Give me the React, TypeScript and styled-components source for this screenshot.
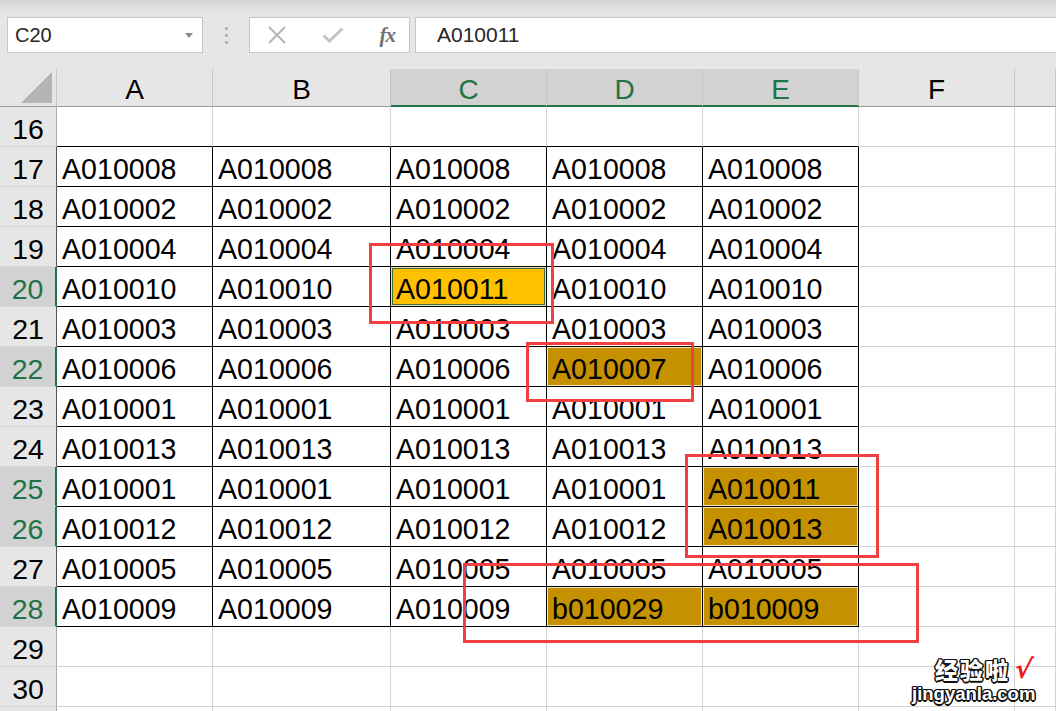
import React from "react";
import styled, { createGlobalStyle, css } from "styled-components";

const Global = createGlobalStyle`
  html, body { margin: 0; padding: 0; background: #ffffff; overflow: hidden; }
  body { font-family: "Liberation Sans", Arial, sans-serif; }
`;

const GREEN = "#217346";
const GRID = "#d4d4d4";
const HEAD_BG = "#e6e6e6";
const HEAD_SEL = "#d2d2d2";

const Page = styled.div`
  position: relative;
  width: 1056px;
  height: 711px;
  overflow: hidden;
  background: #ffffff;
`;

const TopStrip = styled.div`
  height: 17px;
  background: linear-gradient(#d4d4d4, #e3e3e3 55%, #e6e6e6);
`;

const FormulaBar = styled.div`
  display: flex;
  height: 36px;
  padding-left: 7px;
  background: ${HEAD_BG};
`;

const Box = styled.div`
  box-sizing: border-box;
  height: 36px;
  background: #ffffff;
  border: 1px solid #c6c6c6;
  display: flex;
  align-items: center;
`;

const NameBox = styled(Box)`
  width: 196px;
  padding: 0 9px 0 7px;
  justify-content: space-between;
  font-size: 20px;
  color: #262626;
`;

const Separator = styled.div`
  width: 46px;
  display: flex;
  flex-direction: column;
  align-items: center;
  justify-content: center;
  gap: 4px;
`;

const Dot = styled.span`
  width: 3px;
  height: 3px;
  background: #b5b5b5;
`;

const FxBox = styled(Box)`
  width: 161px;
  padding: 0 14px 0 17px;
  justify-content: space-between;
`;

const FxText = styled.span`
  font-family: "Liberation Serif", "Times New Roman", serif;
  font-style: italic;
  font-weight: bold;
  font-size: 21px;
  color: #707070;
  letter-spacing: -1px;
`;

const FormulaInput = styled(Box)`
  flex: 1;
  margin-left: 5px;
  border-right: none;
  padding-left: 21px;
  font-size: 21px;
  color: #262626;
`;

const GapBand = styled.div`
  height: 16px;
  background: ${HEAD_BG};
`;

const Sheet = styled.div`
  display: grid;
  grid-template-columns: 57px 156px 178px 156px 156px 156px 156px 41px;
  grid-template-rows: 38px;
  grid-auto-rows: 40px;
`;

const Corner = styled.div`
  box-sizing: border-box;
  background: ${HEAD_BG};
  border-bottom: 1px solid #9b9b9b;
  border-right: 1px solid #c6c6c6;
  display: flex;
  align-items: flex-end;
  justify-content: flex-end;
  padding: 0 4px 3px 0;
`;

const ColHeader = styled.div<{ $sel?: boolean }>`
  box-sizing: border-box;
  background: ${(p) => (p.$sel ? HEAD_SEL : HEAD_BG)};
  border-right: 1px solid #c6c6c6;
  border-bottom: ${(p) => (p.$sel ? `2px solid ${GREEN}` : "1px solid #9b9b9b")};
  color: ${(p) => (p.$sel ? GREEN : "#000")};
  font-size: 28px;
  line-height: 38px;
  padding-top: 2px;
  text-align: center;
`;

const RowHeader = styled.div<{ $sel?: boolean; $dark?: boolean }>`
  box-sizing: border-box;
  background: ${(p) => (p.$sel ? HEAD_SEL : HEAD_BG)};
  border-bottom: 1px solid ${GRID};
  border-right: 1px solid ${(p) => (p.$dark ? "#555" : "#ababab")};
  ${(p) =>
    p.$sel &&
    css`
      border-right: 2px solid ${GREEN};
    `}
  color: ${(p) => (p.$sel ? GREEN : "#000")};
  font-size: 28.5px;
  line-height: 40px;
  padding-top: 2px;
  text-align: center;
  overflow: hidden;
`;

type Fill = "none" | "active" | "sel";

const Cell = styled.div<{ $fill: Fill; $rb?: boolean; $bb?: boolean }>`
  box-sizing: border-box;
  border-right: 1px solid ${(p) => (p.$rb ? "#000" : GRID)};
  border-bottom: 1px solid ${(p) => (p.$bb ? "#000" : GRID)};
  font-size: 28.6px;
  line-height: 40px;
  padding: 2px 0 0 5px;
  color: #000;
  white-space: nowrap;
  overflow: hidden;
  ${(p) =>
    p.$fill === "active" &&
    css`
      background: #ffc000;
      box-shadow: inset 0 0 0 1px #eadfb0, inset 0 0 0 2px #3b6e3e;
    `}
  ${(p) =>
    p.$fill === "sel" &&
    css`
      background: #c59100;
      box-shadow: inset 0 0 0 1px #f2e4c0;
    `}
`;

const RedBox = styled.div`
  position: absolute;
  box-sizing: border-box;
  border: 3px solid #f23f3f;
  pointer-events: none;
`;

const Watermark = styled.div`
  position: absolute;
  left: 912px;
  top: 654px;
  display: flex;
  flex-direction: column;
  align-items: flex-end;
  pointer-events: none;
`;

const outline = css`
  color: #ffffff;
  text-shadow: -1px -1px 0 #111, 1px -1px 0 #111, -1px 1px 0 #111, 1px 1px 0 #111,
    0 -1.5px 0 #111, 0 1.5px 0 #111, -1.5px 0 0 #111, 1.5px 0 0 #111;
`;

const WmTop = styled.div`
  display: flex;
  align-items: center;
  gap: 5px;
  margin-right: 20px;
  height: 30px;
`;

const WmCn = styled.span`
  ${outline};
  font-family: "Noto Sans CJK SC", sans-serif;
  font-weight: 900;
  font-size: 23px;
  letter-spacing: 2px;
  line-height: 26px;
`;

const WmCheck = styled.span`
  color: #f0141e;
  font-family: "DejaVu Sans", sans-serif;
  font-weight: bold;
  font-size: 26px;
  line-height: 26px;
  transform: skewX(-8deg);
`;

const WmEn = styled.span`
  ${outline};
  font-family: "Liberation Sans", Arial, sans-serif;
  font-weight: bold;
  font-size: 18.5px;
  line-height: 20px;
  margin-right: 17px;
`;

const cols = ["A", "B", "C", "D", "E", "F", ""];
const selCols = new Set(["C", "D", "E"]);
const selRows = new Set([20, 22, 25, 26, 28]);

type RowDef = { n: number; label?: string; cells: string[]; fills?: Record<number, Fill> };

const rep = (v: string) => [v, v, v, v, v];

const dataRows: RowDef[] = [
  { n: 17, cells: rep("A010008") },
  { n: 18, cells: rep("A010002") },
  { n: 19, cells: rep("A010004") },
  { n: 20, cells: ["A010010", "A010010", "A010011", "A010010", "A010010"], fills: { 2: "active" } },
  { n: 21, cells: rep("A010003") },
  { n: 22, cells: ["A010006", "A010006", "A010006", "A010007", "A010006"], fills: { 3: "sel" } },
  { n: 23, cells: rep("A010001") },
  { n: 24, cells: rep("A010013") },
  { n: 25, cells: ["A010001", "A010001", "A010001", "A010001", "A010011"], fills: { 4: "sel" } },
  { n: 26, cells: ["A010012", "A010012", "A010012", "A010012", "A010013"], fills: { 4: "sel" } },
  { n: 27, cells: rep("A010005") },
  { n: 28, cells: ["A010009", "A010009", "A010009", "b010029", "b010009"], fills: { 3: "sel", 4: "sel" } },
];

const rows: RowDef[] = [
  { n: 16, cells: [] },
  ...dataRows,
  { n: 29, cells: [] },
  { n: 30, cells: [] },
  { n: 31, label: "", cells: [] },
];

const XIcon = () => (
  <svg width="20" height="18" viewBox="0 0 20 18">
    <path d="M2 1 L18 17 M18 1 L2 17" stroke="#b3b3b3" strokeWidth="1.8" fill="none" />
  </svg>
);

const CheckIcon = () => (
  <svg width="22" height="16" viewBox="0 0 22 16">
    <path d="M1.5 8.5 L7.5 14 L20.5 1.5" stroke="#c4c4c4" strokeWidth="3" fill="none" />
  </svg>
);

const Arrow = () => (
  <svg width="8" height="5" viewBox="0 0 8 5">
    <path d="M0 0 H8 L4 5 Z" fill="#8a8a8a" />
  </svg>
);

const CornerTri = () => (
  <svg width="31" height="31" viewBox="0 0 31 31">
    <path d="M31 0 V31 H0 Z" fill="#b4b4b4" />
  </svg>
);

export default function App() {
  return (
    <Page>
      <Global />
      <TopStrip />
      <FormulaBar>
        <NameBox>
          <span>C20</span>
          <Arrow />
        </NameBox>
        <Separator>
          <Dot />
          <Dot />
          <Dot />
        </Separator>
        <FxBox>
          <XIcon />
          <CheckIcon />
          <FxText>fx</FxText>
        </FxBox>
        <FormulaInput>A010011</FormulaInput>
      </FormulaBar>
      <GapBand />
      <Sheet>
        <Corner>
          <CornerTri />
        </Corner>
        {cols.map((c, i) => (
          <ColHeader key={`h${i}`} $sel={selCols.has(c)}>
            {c}
          </ColHeader>
        ))}
        {rows.map((r) => {
          const isData = r.n >= 17 && r.n <= 28;
          return (
            <React.Fragment key={r.n}>
              <RowHeader $sel={selRows.has(r.n)} $dark={isData}>
                {r.label ?? r.n}
              </RowHeader>
              {cols.map((_, ci) => {
                const inTable = ci < 5;
                const rb = isData && inTable;
                const bb = inTable && (isData || r.n === 16);
                return (
                  <Cell key={ci} $fill={r.fills?.[ci] ?? "none"} $rb={rb} $bb={bb}>
                    {r.cells[ci] ?? ""}
                  </Cell>
                );
              })}
            </React.Fragment>
          );
        })}
      </Sheet>
      <RedBox style={{ left: 369, top: 243, width: 185, height: 81 }} />
      <RedBox style={{ left: 526, top: 342, width: 168, height: 60 }} />
      <RedBox style={{ left: 685, top: 454, width: 194, height: 104 }} />
      <RedBox style={{ left: 463, top: 563, width: 456, height: 80 }} />
      <Watermark>
        <WmTop>
          <WmCn>经验啦</WmCn>
          <WmCheck>√</WmCheck>
        </WmTop>
        <WmEn>jingyanla.com</WmEn>
      </Watermark>
    </Page>
  );
}
